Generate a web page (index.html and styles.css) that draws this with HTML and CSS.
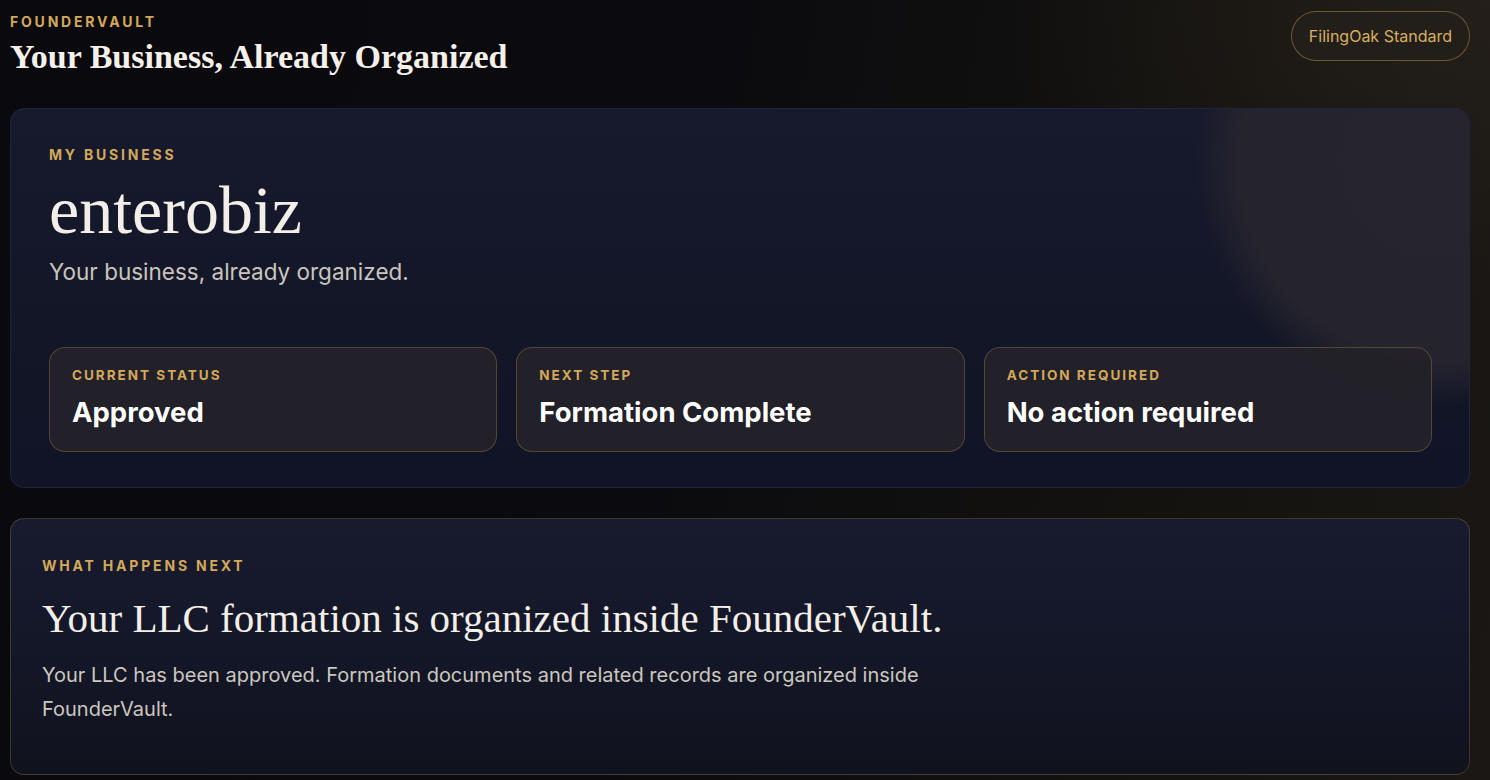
FILE: index.html
```html
<!DOCTYPE html>
<html lang="en">
<head>
<meta charset="utf-8">
<title>FounderVault</title>
<link rel="stylesheet" href="styles.css">
</head>
<body>
<div class="page">
  <header class="top">
    <div class="brand">
      <div class="eyebrow">FounderVault</div>
      <h1 class="page-title">Your Business, Already Organized</h1>
    </div>
    <button class="plan-pill" type="button">FilingOak Standard</button>
  </header>

  <section class="card hero">
    <div class="glow"></div>
    <div class="hero-body">
      <div class="label">My Business</div>
      <h2 class="biz-name">enterobiz</h2>
      <p class="biz-sub">Your business, already organized.</p>
      <div class="stats">
        <div class="stat">
          <div class="label small">Current Status</div>
          <div class="stat-value">Approved</div>
        </div>
        <div class="stat">
          <div class="label small">Next Step</div>
          <div class="stat-value">Formation Complete</div>
        </div>
        <div class="stat">
          <div class="label small">Action Required</div>
          <div class="stat-value">No action required</div>
        </div>
      </div>
    </div>
  </section>

  <section class="card next">
    <div class="label">What Happens Next</div>
    <h3 class="next-title">Your LLC formation is organized inside FounderVault.</h3>
    <p class="next-text">Your LLC has been approved. Formation documents and related records are organized inside FounderVault.</p>
  </section>
</div>
</body>
</html>
```

FILE: styles.css
```css
* { box-sizing: border-box; }

html, body {
  margin: 0;
  height: 100%;
}

body {
  font-family: Inter, "Noto Sans", sans-serif;
  color: #f3f0ea;
  background:
    radial-gradient(ellipse 700px 500px at 100% 0%, rgba(40, 34, 28, 0.75), rgba(40, 34, 28, 0) 70%),
    linear-gradient(100deg, #0a0a0e 0%, #0b0b0f 45%, #15130f 80%, #1a1714 100%);
  overflow: hidden;
}

.page {
  padding: 11px 20px 0 10px;
  display: flex;
  flex-direction: column;
}

.top {
  display: flex;
  justify-content: space-between;
  align-items: flex-start;
  height: 97px;
}

.eyebrow,
.label {
  font-family: Inter, sans-serif;
  font-weight: 700;
  font-size: 14px;
  line-height: 17px;
  letter-spacing: 2.8px;
  text-transform: uppercase;
  color: #d4a85a;
}

.eyebrow {
  margin-top: 2px;
}

.page-title {
  margin: 7px 0 0;
  font-family: "Liberation Serif", serif;
  font-weight: 700;
  font-size: 34px;
  line-height: 40px;
  color: #f5f1ea;
}

.plan-pill {
  height: 50px;
  padding: 0 17px;
  border-radius: 25px;
  border: 1px solid rgba(212, 168, 90, 0.42);
  background: #221f1b;
  color: #d9ad5e;
  font-family: Inter, sans-serif;
  font-size: 16px;
  cursor: pointer;
}

.card {
  position: relative;
  border-radius: 14px;
  overflow: hidden;
}

.hero {
  border: 1px solid #1f2440;
  background: linear-gradient(180deg, #161a2d 0%, #131627 60%, #111426 100%);
}

.glow {
  position: absolute;
  left: 1184px;
  top: -194px;
  width: 490px;
  height: 490px;
  border-radius: 50%;
  background: radial-gradient(circle closest-side, #26242e 0%, #25232d 82%, rgba(37, 35, 45, 0.5) 92%, rgba(37, 35, 45, 0) 100%);
  pointer-events: none;
}

.hero-body {
  position: relative;
  padding: 37px 37px 35px 38px;
}

.biz-name {
  margin: 11px 0 0;
  font-family: "Liberation Serif", serif;
  font-weight: 400;
  font-size: 68px;
  line-height: 72px;
  color: #f3efe8;
}

.biz-sub {
  margin: 12px 0 0;
  font-size: 22.5px;
  line-height: 28px;
  color: #c9c5bd;
}

.stats {
  margin-top: 61px;
  display: grid;
  grid-template-columns: repeat(3, 1fr);
  gap: 19px;
}

.stat {
  height: 105px;
  padding: 19px 22px;
  border-radius: 16px;
  border: 1px solid rgba(212, 168, 90, 0.28);
  background: rgba(36, 34, 40, 0.92);
}

.label.small {
  font-size: 13.5px;
  letter-spacing: 2px;
}

.stat-value {
  margin-top: 12px;
  font-size: 27.5px;
  font-weight: 700;
  line-height: 32px;
  color: #ffffff;
}

.next {
  margin-top: 30px;
  height: 257px;
  padding: 38px 31px;
  border: 1px solid rgba(212, 168, 90, 0.24);
  background: linear-gradient(180deg, #181b2e 0%, #141728 50%, #10121d 100%);
}

.next-title {
  margin: 19px 0 0;
  font-family: "Liberation Serif", serif;
  font-weight: 400;
  font-size: 41px;
  line-height: 50px;
  color: #f3efe8;
}

.next-text {
  margin: 15px 0 0;
  max-width: 920px;
  font-size: 20px;
  line-height: 34px;
  color: #cbc7bf;
}
```
